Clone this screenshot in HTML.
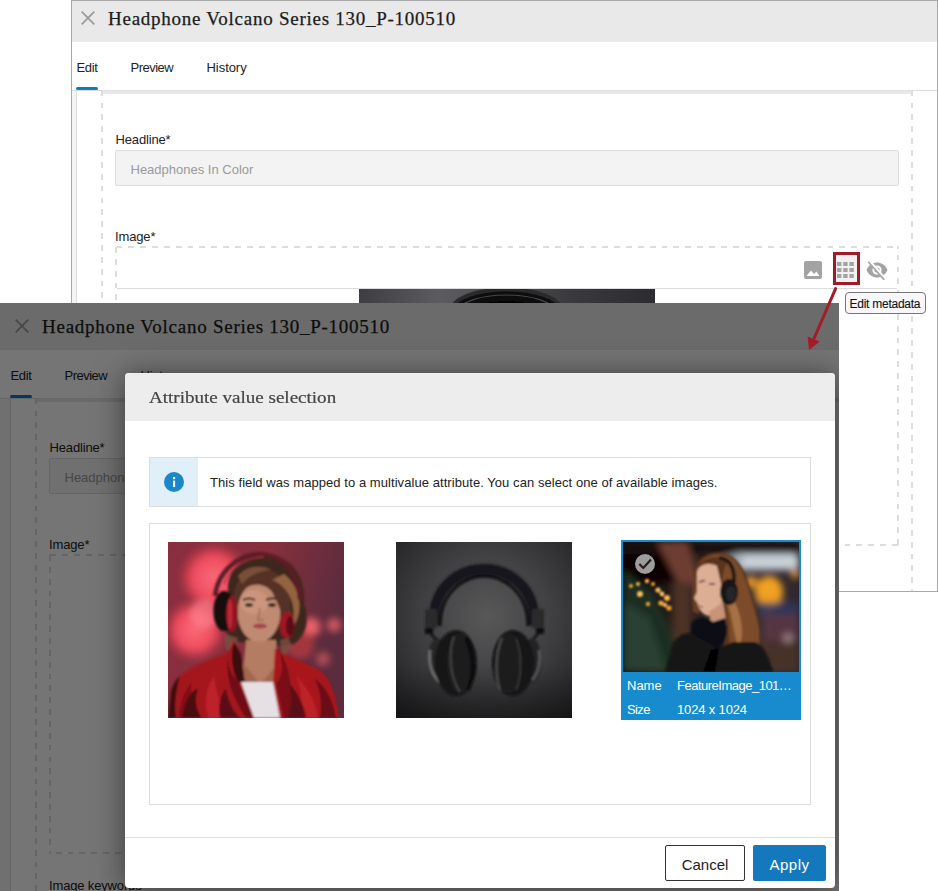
<!DOCTYPE html>
<html><head><meta charset="utf-8"><title>Attribute value selection</title>
<style>
*{box-sizing:border-box;margin:0;padding:0}
html,body{width:938px;height:891px;overflow:hidden;background:#fff}
body{position:relative;font-family:"Liberation Sans",sans-serif;font-size:14px;color:#222}
.win{position:absolute;overflow:hidden;background:#fff}
.win>*{position:absolute}
#w1{left:71px;top:0;width:867px;height:592px}
#w1::after{content:"";position:absolute;left:0;top:0;right:0;bottom:0;border:1px solid #a9a9a9;pointer-events:none}
#w2clip{position:absolute;left:0;top:303px;width:839px;height:588px;overflow:hidden;background:#e9e9e9}
#w2{left:5px;top:5px;width:900px;height:700px;overflow:visible}
#dim{position:absolute;left:0;top:0;right:0;bottom:0;background:rgba(0,0,0,.54)}
.hdr{left:-80px;top:0;right:0;height:42px;background:#e9e9e9}
.x{position:absolute;left:90px;top:11px;width:14px;height:14px;stroke:#9a9a9a;stroke-width:1.7;fill:none}
.ttl{position:absolute;left:117px;top:7px;font-family:"Liberation Serif",serif;font-size:19px;line-height:24px;color:#1c1c1c;white-space:nowrap;letter-spacing:.74px;-webkit-text-stroke:.25px #1c1c1c}
.tabs{left:-80px;top:42px;right:0;height:48px;background:#fff}
.tab{position:absolute;top:17px;line-height:18px;font-size:13px;color:#222;white-space:nowrap}
.t1{left:85.5px;letter-spacing:-.35px}.t2{left:139.5px;letter-spacing:-.5px}.t3{left:215.5px;letter-spacing:-.05px}
.ul{position:absolute;left:85px;top:45px;width:22px;height:3px;border-radius:1.5px;background:#0a7cc2}
.tline{left:-80px;right:0;top:90px;height:1px;background:#dcdcdc}
.tline2{left:32px;width:808px;top:90px;height:4px;background:#e8e8e8;border-top:1px solid #e0e0e0}
.strip{left:-80px;width:86px;top:91px;bottom:0;background:#f5f5f5;border-right:1px solid #dedede}
.outer{left:30px;width:812px;top:90px;bottom:-10px;background:repeating-linear-gradient(180deg,#ddd 0.7px,#ddd 6.50px,transparent 6.50px,transparent 12.57px) left top/2px 100% no-repeat,repeating-linear-gradient(180deg,#ddd 0.7px,#ddd 6.50px,transparent 6.50px,transparent 12.57px) right top/2px 100% no-repeat}
.lbl{font-size:13px;line-height:18px;color:#222;white-space:nowrap}
.l1{left:44.5px;top:131px;letter-spacing:-.15px}
.l2{left:44px;top:228px;letter-spacing:-.15px}
.l3{left:44px;top:569px;letter-spacing:-.15px}
.inp{left:44px;top:150px;width:784px;height:36px;background:#f3f3f3;border:1px solid #dcdcdc;border-radius:2px}
.inp span{position:absolute;left:14.5px;top:10px;line-height:18px;font-size:13px;color:#9a9a9a;white-space:nowrap}
.drop{left:44px;top:246px;width:784px;height:300px;background:repeating-linear-gradient(90deg,#ddd 1.5px,#ddd 7.30px,transparent 7.30px,transparent 13.35px) left top/100% 2px no-repeat,repeating-linear-gradient(90deg,#ddd 6.75px,#ddd 12.55px,transparent 12.55px,transparent 18.60px) left bottom/100% 2px no-repeat,repeating-linear-gradient(180deg,#ddd 1.1px,#ddd 6.90px,transparent 6.90px,transparent 12.95px) left top/2px 100% no-repeat,repeating-linear-gradient(180deg,#ddd 8.7px,#ddd 14.50px,transparent 14.50px,transparent 20.55px) right top/2px 100% no-repeat}
.tbline{left:46px;width:780px;top:288px;height:1px;background:#dcdcdc}
#arrow{position:absolute;left:0;top:0;pointer-events:none}
#tip{position:absolute;left:845px;top:292px;width:81px;height:22px;border:1px solid #767676;border-radius:4px;background:#f7f7fc;font-size:12px;line-height:22px;padding-left:3.5px;color:#111;white-space:nowrap;letter-spacing:-.25px;-webkit-text-stroke:.1px #111}
#modal{position:absolute;left:125px;top:70px;width:710px;height:515px;background:#fff;border-radius:4px;box-shadow:0 2px 30px rgba(0,0,0,.5);overflow:hidden}
#modal>*{position:absolute}
.mh{left:0;top:0;right:0;height:48px;background:#ededed}
.mh span{position:absolute;left:24px;top:14px;font-family:"Liberation Serif",serif;font-size:17px;line-height:22px;color:#444;white-space:nowrap;transform-origin:0 50%;transform:scaleX(1.12);-webkit-text-stroke:.2px #444}
.info{left:24px;top:84px;width:662px;height:50px;border:1px solid #ddd;background:#fff}
.ib{position:absolute;left:0;top:0;width:48px;height:48px;background:#e1eff8}
.ib svg{position:absolute;left:14px;top:14px}
.it{position:absolute;left:60px;top:15.5px;line-height:18px;font-size:13px;letter-spacing:.06px;color:#222;white-space:nowrap}
.grid{left:24px;top:150px;width:662px;height:282px;border:1px solid #ddd;background:#fff}
.grid>*{position:absolute}
.im{width:176px;height:176px;top:18px;overflow:hidden}
.im1{left:18px;background:#8a3a45}
.im2{left:246px;background:#3a3a3c}
.sel{left:471px;top:16px;width:180px;height:180px;background:#178bcd;border:2px solid #178bcd}
.im3{position:absolute;left:0;top:0;width:176px;height:130px;background:#333;overflow:hidden}
.row{position:absolute;left:0;width:176px;height:24px;color:#fff;font-size:13px;line-height:18px;white-space:nowrap}
.r1{top:133px}.r2{top:157px}
.row .k{position:absolute;left:4px;top:2px}
.row .v{position:absolute;left:54px;top:2px;letter-spacing:-.5px}.r2 .v{letter-spacing:-.15px}.r2 .k{letter-spacing:-.6px}
.mf{left:0;right:0;top:464px;height:1px;background:#ddd}
.btn{top:472px;height:36px;font-size:15px;line-height:20px;text-align:center;border-radius:2px}
.btn span{position:absolute;left:0;right:0;top:9px}
.cancel{left:540px;width:80px;border:1px solid #333;color:#222;background:#fff}
.apply{left:628px;width:73px;background:#1478bd;color:#fff;letter-spacing:.5px}.apply span{top:10px}
.cancel span{left:-1px;right:-1px}
.im svg,.im3 svg,.hp1 svg{display:block}

</style></head>
<body>
<div id="w1" class="win">
  <div class="hdr"><svg class="x" viewBox="0 0 14 14"><path d="M0.7 0.7 L13.3 13.3 M13.3 0.7 L0.7 13.3"/></svg><span class="ttl">Headphone Volcano Series 130_P-100510</span></div>
  <div class="tabs"><span class="tab t1">Edit</span><span class="tab t2">Preview</span><span class="tab t3">History</span><i class="ul"></i></div>
  <div class="tline"></div>
  <div class="tline2"></div>
  <div class="strip"></div>
  <div class="outer"></div>
  <div class="lbl l1">Headline*</div>
  <div class="inp"><span>Headphones In Color</span></div>
  <div class="lbl l2">Image*</div>
  <div class="drop"></div>
  <div class="lbl l3">Image keywords</div>
<div class="tbline"></div>
<div class="hp1" style="left:288px;top:289px;width:296px;height:296px;overflow:hidden"><svg width="296" height="296" viewBox="0 0 296 296">
<defs><linearGradient id="a4" x1="0" y1="0" x2="1" y2="0"><stop offset="0" stop-color="#3e3e42"/><stop offset=".27" stop-color="#5c5c60"/><stop offset=".5" stop-color="#4c4c50"/><stop offset=".72" stop-color="#3a3a3e"/><stop offset="1" stop-color="#2c2c30"/></linearGradient>
<filter id="f4"><feGaussianBlur stdDeviation=".6"/></filter></defs>
<rect width="296" height="296" fill="url(#a4)"/>
<g filter="url(#f4)"><ellipse cx="147.5" cy="20.5" rx="54" ry="20" fill="#0a0a0b" stroke="#2a2a2c" stroke-width="4"/><ellipse cx="147.5" cy="22" rx="47" ry="16" fill="none" stroke="#4a4a4d" stroke-width="1.2"/><ellipse cx="147.5" cy="26" rx="42" ry="14" fill="#060606"/></g>
</svg></div>
<svg class="ico1" style="left:733px;top:261px;width:18px;height:18px" viewBox="0 0 18 18"><rect x="0" y="0" width="18" height="18" rx="2" fill="#a3a3a3"/><path d="M2.5 15 L7 9.5 L10 13 L12.5 10.5 L15.5 15 Z" fill="#fff"/></svg>
<div class="redbox" style="left:762px;top:252px;width:27px;height:33px;border:3px solid #a01b27;background:#f1f1f1"></div>
<svg class="ico2" style="left:766px;top:262px;width:17px;height:16px" viewBox="0 0 17 16"><g fill="#a3a3a3"><rect x="0" y="0" width="4.4" height="4"/><rect x="6.2" y="0" width="4.4" height="4"/><rect x="12.4" y="0" width="4.4" height="4"/><rect x="0" y="6" width="4.4" height="4"/><rect x="6.2" y="6" width="4.4" height="4"/><rect x="12.4" y="6" width="4.4" height="4"/><rect x="0" y="12" width="4.4" height="4"/><rect x="6.2" y="12" width="4.4" height="4"/><rect x="12.4" y="12" width="4.4" height="4"/></g></svg>
<svg class="ico3" style="left:795px;top:260px;width:22px;height:20px" viewBox="0 0 22 20"><path d="M0.5 10 C3 4.5 7 2.5 11 2.5 C15 2.5 19 4.5 21.5 10 C19 15.5 15 17.5 11 17.5 C7 17.5 3 15.5 0.5 10 Z" fill="#a3a3a3"/><circle cx="11" cy="10" r="4.6" fill="#fff"/><circle cx="11" cy="10" r="2.6" fill="#a3a3a3"/><path d="M3 1 L19 19" stroke="#fff" stroke-width="3.2"/><path d="M2.2 1.8 L18.2 19.8" stroke="#a3a3a3" stroke-width="1.7"/></svg>
</div>
<div id="w2clip"><div id="w2" class="win">
  <div class="hdr"><svg class="x" viewBox="0 0 14 14"><path d="M0.7 0.7 L13.3 13.3 M13.3 0.7 L0.7 13.3"/></svg><span class="ttl">Headphone Volcano Series 130_P-100510</span></div>
  <div class="tabs"><span class="tab t1">Edit</span><span class="tab t2">Preview</span><span class="tab t3">History</span><i class="ul"></i></div>
  <div class="tline"></div>
  <div class="tline2"></div>
  <div class="strip"></div>
  <div class="outer"></div>
  <div class="lbl l1">Headline*</div>
  <div class="inp"><span>Headphones In Color</span></div>
  <div class="lbl l2">Image*</div>
  <div class="drop"></div>
  <div class="lbl l3">Image keywords</div>
</div><div id="dim"></div>
<div id="modal">
  <div class="mh"><span>Attribute value selection</span></div>
  <div class="info"><div class="ib"><svg viewBox="0 0 20 20" width="20" height="20"><circle cx="10" cy="10" r="10" fill="#1a87c9"/><rect x="9" y="8.6" width="2.1" height="6.4" fill="#fff"/><rect x="9" y="5" width="2.1" height="2.2" fill="#fff"/></svg></div><span class="it">This field was mapped to a multivalue attribute. You can select one of available images.</span></div>
  <div class="grid">
    <div class="im im1"><svg width="176" height="176" viewBox="0 0 176 176">
<defs>
<linearGradient id="a1" x1="0" y1="0" x2="1" y2="0.3"><stop offset="0" stop-color="#8a2e3e"/><stop offset=".55" stop-color="#86303c"/><stop offset="1" stop-color="#5a2c3e"/></linearGradient>
<radialGradient id="b1"><stop offset="0" stop-color="#fa6a78"/><stop offset=".6" stop-color="#ee4c5e"/><stop offset="1" stop-color="#d8384e" stop-opacity="0"/></radialGradient>
<radialGradient id="b2"><stop offset="0" stop-color="#f8707a"/><stop offset=".7" stop-color="#e85a5e" stop-opacity=".8"/><stop offset="1" stop-color="#d04a50" stop-opacity="0"/></radialGradient>
<filter id="f1" x="-5%" y="-5%" width="110%" height="110%"><feGaussianBlur stdDeviation="1"/></filter>
<filter id="f1b" x="-20%" y="-20%" width="140%" height="140%"><feGaussianBlur stdDeviation="3"/></filter>
</defs>
<rect width="176" height="176" fill="url(#a1)"/>
<g filter="url(#f1b)">
<circle cx="46" cy="36" r="36" fill="url(#b1)"/>
<circle cx="27" cy="88" r="32" fill="url(#b1)"/>
<circle cx="36" cy="72" r="14" fill="#ff8894" opacity=".6"/>
<circle cx="143" cy="85" r="12" fill="url(#b2)"/>
<circle cx="166" cy="83" r="9" fill="url(#b2)" opacity=".8"/>
<circle cx="155" cy="117" r="9" fill="url(#b2)" opacity=".6"/>
<circle cx="132" cy="103" r="14" fill="#c83c40" opacity=".6"/>
</g>
<g filter="url(#f1)">
<path d="M60 50 C58 22 84 9 104 13 C128 18 138 40 136 62 C142 78 138 94 126 102 L112 104 L70 100 C58 96 53 84 57 70 Z" fill="#3e251c"/>
<path d="M58 92 C54 100 58 110 66 112 L70 96 Z" fill="#7a5040" opacity=".8"/>
<path d="M120 96 C126 104 122 112 114 114 L112 98 Z" fill="#7a5040" opacity=".8"/>
<path d="M78 98 L108 98 L110 120 L112 140 L72 140 L76 120 Z" fill="#b47c64"/>
<path d="M76 122 L92 142 L110 122 L112 142 L72 142 Z" fill="#a06850"/>
<ellipse cx="91" cy="70" rx="21.5" ry="30" fill="#c08a72"/>
<ellipse cx="86" cy="60" rx="14" ry="12" fill="#d09a82" opacity=".7"/>
<path d="M75 58 q6 -3 12 0 M98 58 q6 -3 12 -1" stroke="#2a1a18" stroke-width="2" fill="none"/>
<ellipse cx="81" cy="63" rx="4" ry="1.8" fill="#20140f"/><ellipse cx="104" cy="63" rx="4" ry="1.8" fill="#20140f"/>
<path d="M92 66 L90 78 L96 78" stroke="#a06c58" stroke-width="1.6" fill="none"/>
<ellipse cx="92" cy="84" rx="7" ry="2.4" fill="#a8424a"/>
<path d="M66 50 C70 30 90 22 106 30 C118 36 124 50 122 66 C128 74 126 88 120 92 C116 80 112 64 104 50 C96 40 80 40 72 52 C70 58 68 64 68 70 C64 64 64 56 66 50 Z" fill="#553325"/>
<path d="M104 38 C120 44 130 62 124 86 C136 72 134 46 116 32 Z" fill="#94633f"/><path d="M70 34 C78 24 92 22 104 28 C94 28 82 32 74 42 Z" fill="#7a5038"/>
<path d="M47 54 C50 28 72 12 92 12 C116 13 131 32 132 58" stroke="#5e1c28" stroke-width="4.5" fill="none"/>
<path d="M56 42 C62 26 78 15 96 15" stroke="#a03040" stroke-width="1.5" fill="none"/>
<ellipse cx="56" cy="69" rx="10.5" ry="20" fill="#140c10"/>
<ellipse cx="64" cy="72" rx="6" ry="18" fill="#8e1622"/>
<ellipse cx="62" cy="72" rx="2.5" ry="15" fill="#c02834"/>
<ellipse cx="119" cy="83" rx="7.5" ry="13" fill="#a01824"/>
<ellipse cx="122" cy="84" rx="4" ry="10" fill="#5a0e16"/>
<path d="M0 176 L3 150 C8 134 18 128 32 122 L58 111 C63 106 65 102 66 98 L73 112 L77 142 L90 176 Z" fill="#a4181f"/>
<path d="M112 176 L105 142 L107 106 L116 112 L150 127 C164 136 168 156 171 176 Z" fill="#a8181f"/>
<path d="M62 104 C58 120 62 132 70 140 L86 176 L78 176 C66 156 54 136 62 104 Z" fill="#6e0e16"/>
<path d="M108 104 C116 118 116 132 108 142 L116 176 L122 176 C122 156 128 130 108 104 Z" fill="#7a1018"/>
<path d="M10 176 C12 160 16 148 24 140 C22 154 24 166 30 176 Z" fill="#7e1018" opacity=".8"/>
<path d="M40 176 C36 160 38 146 46 134 C48 150 52 164 62 176 Z" fill="#c8262e" opacity=".7"/>
<path d="M130 176 C134 160 134 146 128 134 C140 146 148 160 150 176 Z" fill="#c4242c" opacity=".7"/>
<path d="M0 176 L3 150 C5 142 8 138 12 134 C8 148 6 162 8 176 Z" fill="#3a0a10"/>
<path d="M14 176 C16 160 22 150 30 146 C26 158 28 168 34 176 Z" fill="#4a0a10"/>
<path d="M52 176 C50 164 52 154 58 146 C60 158 64 168 72 176 Z" fill="#5a0c14"/>
<path d="M120 176 C124 162 124 150 120 140 C130 150 136 164 138 176 Z" fill="#5a0c14"/>
<path d="M152 176 C154 160 152 146 146 136 C158 144 166 160 168 176 Z" fill="#6a1018"/>
<path d="M66 100 L73 112 L77 142 L70 140 C64 128 62 114 66 100 Z" fill="#3a080c"/>
<path d="M73 140 L105 140 L112 176 L86 176 Z" fill="#e6e0e4"/>
</g>
</svg></div>
    <div class="im im2"><svg width="176" height="176" viewBox="0 0 176 176">
<defs>
<radialGradient id="a2" cx=".52" cy=".42" r=".75"><stop offset="0" stop-color="#585859"/><stop offset=".45" stop-color="#424244"/><stop offset="1" stop-color="#202022"/></radialGradient>
<linearGradient id="c2" x1="0" y1="0" x2="0" y2="1"><stop offset="0" stop-color="#000" stop-opacity="0"/><stop offset=".7" stop-color="#000" stop-opacity="0"/><stop offset="1" stop-color="#000" stop-opacity=".35"/></linearGradient>
<filter id="f2" x="-5%" y="-5%" width="110%" height="110%"><feGaussianBlur stdDeviation=".9"/></filter>
</defs>
<rect width="176" height="176" fill="url(#a2)"/>
<rect width="176" height="176" fill="url(#c2)"/>
<g filter="url(#f2)">
<path d="M37 84 C36 44 64 27 88 27 C112 27 140 44 139 84" stroke="#19191b" stroke-width="11" fill="none"/>
<path d="M32 82 C30 40 62 21 88 21 C114 21 146 40 144 82" stroke="#3c3c3f" stroke-width="1.6" fill="none"/>
<path d="M44 84 C44 50 68 34 88 34 C108 34 132 50 132 84" stroke="#0c0c0d" stroke-width="3" fill="none"/>
<rect x="29" y="67" width="12" height="19" rx="1" fill="#2a2a2c"/><rect x="136" y="67" width="12" height="19" rx="1" fill="#2a2a2c"/>
<rect x="29" y="86" width="8" height="6" fill="#111"/><rect x="140" y="86" width="8" height="6" fill="#111"/>
<path d="M35 92 L44 102 M142 92 L133 102" stroke="#111" stroke-width="2.5"/>
<ellipse cx="42" cy="118" rx="10" ry="22" fill="#262628"/>
<path d="M34 108 C32 122 36 134 44 140" stroke="#6a6a6c" stroke-width="3" fill="none"/>
<ellipse cx="60" cy="121" rx="21" ry="33" fill="#141416"/>
<ellipse cx="64" cy="121" rx="13" ry="30" fill="#1d1d1f"/>
<path d="M58 94 C52 110 54 136 64 150" stroke="#404043" stroke-width="2.2" fill="none"/>
<path d="M70 96 C78 112 78 134 72 148" stroke="#0a0a0a" stroke-width="4" fill="none"/>
<ellipse cx="136" cy="118" rx="9" ry="22" fill="#242426"/>
<path d="M143 108 C145 120 142 132 136 138" stroke="#58585a" stroke-width="2.5" fill="none"/>
<ellipse cx="117" cy="121" rx="21" ry="33" fill="#131315"/>
<ellipse cx="113" cy="121" rx="13" ry="30" fill="#1c1c1e"/>
<path d="M106 96 C99 112 99 134 104 148" stroke="#48484b" stroke-width="2.4" fill="none"/>
<path d="M120 96 C126 112 126 134 120 148" stroke="#343437" stroke-width="2" fill="none"/>
</g>
</svg></div>
    <div class="sel"><div class="im3"><svg width="176" height="130" viewBox="0 0 176 130">
<defs>
<filter id="f3" x="-5%" y="-5%" width="110%" height="110%"><feGaussianBlur stdDeviation="1"/></filter>
<filter id="f3c" x="-30%" y="-30%" width="160%" height="160%"><feGaussianBlur stdDeviation="1.1"/></filter>
<filter id="f3b" x="-30%" y="-30%" width="160%" height="160%"><feGaussianBlur stdDeviation="3.5"/></filter>
<linearGradient id="a3" x1="0" y1="0" x2="1" y2="0"><stop offset="0" stop-color="#0e0808"/><stop offset=".4" stop-color="#2e2220"/><stop offset=".7" stop-color="#3e3232"/><stop offset="1" stop-color="#30262e"/></linearGradient>
</defs>
<rect width="176" height="130" fill="url(#a3)"/>
<g filter="url(#f3b)">
<rect x="0" y="0" width="60" height="40" fill="#0a0505"/><rect x="0" y="0" width="176" height="12" fill="#120c0c"/>
<path d="M34 0 L64 0 L78 40 L60 50 Z" fill="#6e3c32"/>
<rect x="50" y="40" width="18" height="60" fill="#4e3226"/>
<path d="M0 28 L30 50 L50 90 L55 130 L0 130 Z" fill="#1e2e22"/>
<path d="M0 60 L26 76 L44 130 L0 130 Z" fill="#2a4030"/>
<rect x="108" y="12" width="68" height="16" rx="6" fill="#c8d0d8"/>
<rect x="100" y="14" width="20" height="10" rx="4" fill="#9aa4b0"/>
<ellipse cx="146" cy="50" rx="14" ry="16" fill="#f0a020"/>
<circle cx="128" cy="40" r="6" fill="#e89a28"/>
<circle cx="172" cy="32" r="4" fill="#f0a020"/>
<rect x="135" y="60" width="41" height="14" fill="#2a3a6a" opacity=".7"/>
<rect x="140" y="72" width="36" height="30" fill="#5e3a48" opacity=".8"/>
<rect x="130" y="98" width="46" height="32" fill="#46322c"/>
<circle cx="165" cy="96" r="5" fill="#c0a8a8" opacity=".6"/>
</g>
<g filter="url(#f3c)"><circle cx="8" cy="44" r="2" fill="#f8a838"/><circle cx="15" cy="42" r="2" fill="#ffb848"/><circle cx="24" cy="39" r="2.2" fill="#ffb848"/><circle cx="30" cy="42" r="2" fill="#f8a838"/><circle cx="35" cy="48" r="2.6" fill="#ffc058"/><circle cx="39" cy="52" r="2.4" fill="#ffc870"/><circle cx="44" cy="56" r="3" fill="#ffb850"/><circle cx="17" cy="52" r="3" fill="#ffc058"/><circle cx="38" cy="61" r="2.6" fill="#f8a838"/><circle cx="46" cy="66" r="2.6" fill="#f0a030"/><circle cx="25" cy="62" r="2.2" fill="#f0a030"/><circle cx="42" cy="63" r="2.2" fill="#ffb850"/></g>
<g filter="url(#f3)">
<path d="M72 26 C76 10 98 6 110 15 C124 26 126 46 131 62 C138 80 140 98 132 113 L104 114 L96 70 Z" fill="#5a341e"/><path d="M74 24 C70 36 68 52 70 70 L76 72 L76 30 Z" fill="#6a3e24"/>
<path d="M74 30 C76 22 86 20 94 24 L100 50 L98 68 L88 74 C80 74 76 68 75 62 L71 56 L74 50 Z" fill="#dcae94"/>
<path d="M76 40 l6 -1.5 M86 42 l6 0" stroke="#4a2c20" stroke-width="1.4"/>
<path d="M74 64 l6 1" stroke="#a85a58" stroke-width="1.6"/>
<path d="M86 70 L100 60 L104 84 L88 84 Z" fill="#c89478"/>
<path d="M74 26 C80 14 96 12 104 20 C100 30 98 38 100 50 L104 70 C108 86 104 100 110 114 L134 110 C141 90 131 70 128 56 C122 36 118 22 108 16 C98 9 80 12 74 26 Z" fill="#7c4c2a"/>
<path d="M104 60 C110 76 110 92 116 106 C122 92 118 74 112 60 Z" fill="#b07a4c" opacity=".8"/>
<path d="M96 16 C106 16 112 26 111 40" stroke="#121214" stroke-width="3.5" fill="none"/>
<ellipse cx="106" cy="50" rx="9" ry="13" fill="#131316"/>
<ellipse cx="108" cy="52" rx="5" ry="8" fill="#26262a"/>
<path d="M68 82 C72 74 84 74 90 80 L102 76 C106 86 104 100 96 106 C84 110 72 104 68 96 Z" fill="#111114"/>
<path d="M42 130 L50 102 C56 92 64 90 70 92 L96 106 L110 100 L132 100 C142 104 146 116 150 130 Z" fill="#121215"/>
<path d="M88 108 L96 106 L92 130 L80 130 Z" fill="#050506"/>
</g>
<circle cx="22" cy="22" r="10" fill="#a9a9a9" opacity=".93"/>
<path d="M16.3 22 L20.3 26 L28 17.6" stroke="#2a1a18" stroke-width="2.2" fill="none"/>
</svg></div>
      <div class="row r1"><span class="k">Name</span><span class="v">FeatureImage_101…</span></div>
      <div class="row r2"><span class="k">Size</span><span class="v">1024 x 1024</span></div>
    </div>
  </div>
  <div class="mf"></div>
  <div class="btn cancel"><span>Cancel</span></div>
  <div class="btn apply"><span>Apply</span></div>
</div>

</div>
<svg id="arrow" width="938" height="891" viewBox="0 0 938 891"><path d="M835.6 288.6 L813.6 339.5" stroke="#a51c27" stroke-width="3" stroke-linecap="round" fill="none"/><path d="M809.1 350 L807.6 336.4 L819.6 341.6 Z" fill="#a51c27"/></svg>
<div id="tip">Edit metadata</div>
</body></html>
